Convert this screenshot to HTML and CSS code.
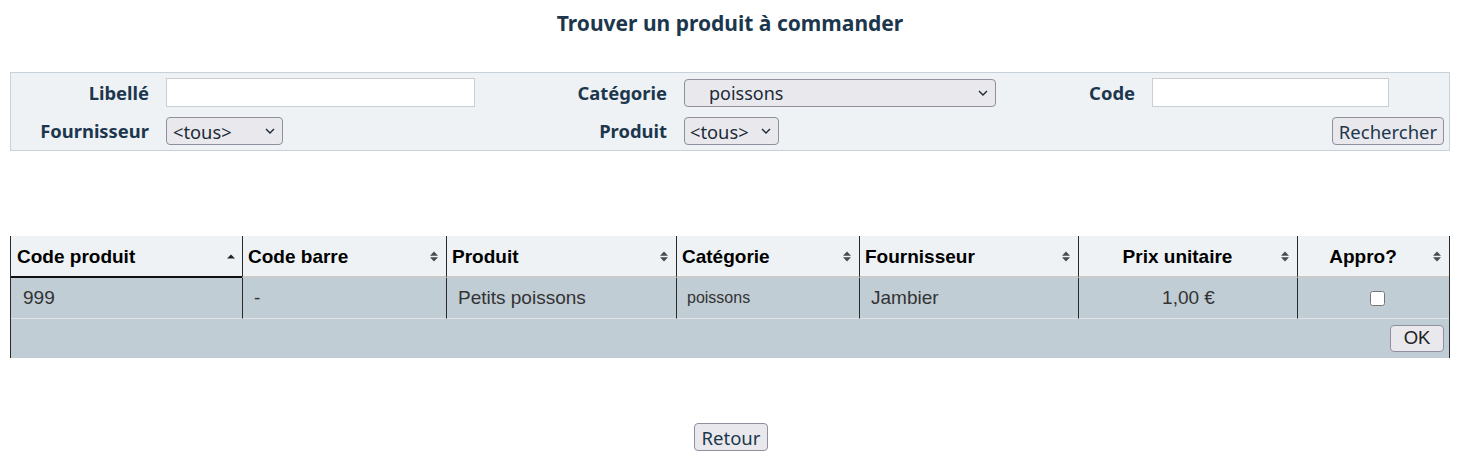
FILE: index.html
```html
<!DOCTYPE html>
<html lang="fr">
<head>
<meta charset="utf-8">
<title>Trouver un produit à commander</title>
<link rel="stylesheet" href="styles.css">
</head>
<body>
<h1 class="title">Trouver un produit à commander</h1>

<form class="search">
  <label class="lbl">Libellé</label>
  <div class="fld"><input class="txt txt-lib" type="text"></div>
  <label class="lbl">Catégorie</label>
  <div class="fld">
    <span class="sel sel-cat">
      <select><option>poissons</option></select>
      <svg class="chev" width="10" height="6" viewBox="0 0 10 6"><path d="M1 1 L5 5 L9 1" fill="none" stroke="#1d2733" stroke-width="1.4"/></svg>
    </span>
  </div>
  <label class="lbl">Code</label>
  <div class="fld"><input class="txt txt-code" type="text"></div>

  <label class="lbl">Fournisseur</label>
  <div class="fld">
    <span class="sel sel-four">
      <select><option>&lt;tous&gt;</option></select>
      <svg class="chev" width="10" height="6" viewBox="0 0 10 6"><path d="M1 1 L5 5 L9 1" fill="none" stroke="#1d2733" stroke-width="1.4"/></svg>
    </span>
  </div>
  <label class="lbl">Produit</label>
  <div class="fld">
    <span class="sel sel-prod">
      <select><option>&lt;tous&gt;</option></select>
      <svg class="chev" width="10" height="6" viewBox="0 0 10 6"><path d="M1 1 L5 5 L9 1" fill="none" stroke="#1d2733" stroke-width="1.4"/></svg>
    </span>
  </div>
  <div class="spacer"></div>
  <div class="fld fld-btn"><button type="button" class="btn btn-search">Rechercher</button></div>
</form>

<table class="grid">
  <colgroup>
    <col class="c1"><col class="c2"><col class="c3"><col class="c4"><col class="c5"><col class="c6"><col class="c7">
  </colgroup>
  <thead>
    <tr>
      <th class="sorted"><div class="hd"><span class="ht">Code produit</span><svg class="si" width="8" height="11" viewBox="0 0 8 11"><path d="M0 7.5 L4 3.5 L8 7.5 Z" fill="#222"/></svg></div></th>
      <th><div class="hd"><span class="ht">Code barre</span><svg class="si" width="8" height="11" viewBox="0 0 8 11"><path d="M0 4.7 L4 0.5 L8 4.7 Z M0 6.3 L4 10.5 L8 6.3 Z" fill="#4a4a4a"/></svg></div></th>
      <th><div class="hd"><span class="ht">Produit</span><svg class="si" width="8" height="11" viewBox="0 0 8 11"><path d="M0 4.7 L4 0.5 L8 4.7 Z M0 6.3 L4 10.5 L8 6.3 Z" fill="#4a4a4a"/></svg></div></th>
      <th><div class="hd"><span class="ht">Catégorie</span><svg class="si" width="8" height="11" viewBox="0 0 8 11"><path d="M0 4.7 L4 0.5 L8 4.7 Z M0 6.3 L4 10.5 L8 6.3 Z" fill="#4a4a4a"/></svg></div></th>
      <th><div class="hd"><span class="ht">Fournisseur</span><svg class="si" width="8" height="11" viewBox="0 0 8 11"><path d="M0 4.7 L4 0.5 L8 4.7 Z M0 6.3 L4 10.5 L8 6.3 Z" fill="#4a4a4a"/></svg></div></th>
      <th><div class="hd"><span class="ht center">Prix unitaire</span><svg class="si" width="8" height="11" viewBox="0 0 8 11"><path d="M0 4.7 L4 0.5 L8 4.7 Z M0 6.3 L4 10.5 L8 6.3 Z" fill="#4a4a4a"/></svg></div></th>
      <th><div class="hd"><span class="ht center">Appro?</span><svg class="si" width="8" height="11" viewBox="0 0 8 11"><path d="M0 4.7 L4 0.5 L8 4.7 Z M0 6.3 L4 10.5 L8 6.3 Z" fill="#4a4a4a"/></svg></div></th>
    </tr>
  </thead>
  <tbody>
    <tr class="row">
      <td>999</td>
      <td>-</td>
      <td>Petits poissons</td>
      <td class="small">poissons</td>
      <td>Jambier</td>
      <td class="center">1,00 €</td>
      <td class="center chk"><input type="checkbox"></td>
    </tr>
  </tbody>
  <tfoot>
    <tr>
      <td colspan="7" class="foot"><button type="button" class="btn btn-ok">OK</button></td>
    </tr>
  </tfoot>
</table>

<div class="back"><button type="button" class="btn btn-back">Retour</button></div>
</body>
</html>
```

FILE: styles.css
```css
html, body {
  margin: 0;
  padding: 0;
  background: #ffffff;
}

body {
  padding: 0 12px 0 10px;
  font-family: "Noto Sans", "DejaVu Sans", sans-serif;
  color: #1c374d;
}

.title {
  margin: 10px 0 36px;
  font-size: 21px;
  line-height: 26px;
  font-weight: 700;
  text-align: center;
  color: #1c374d;
}

/* search form */
.search {
  display: grid;
  grid-template-columns: 146px 343px 175px 325px 143px 306px;
  grid-template-rows: 29px 28px;
  row-gap: 10px;
  align-items: center;
  background: #eef2f5;
  border: 1px solid #c6d1da;
  padding: 5px 0;
}

.lbl {
  text-align: right;
  padding-right: 8px;
  font-weight: 700;
  font-size: 18.4px;
  line-height: 24px;
  color: #1c374d;
}

.fld {
  padding-left: 9px;
  display: flex;
  align-items: center;
}

.fld-btn {
  justify-content: flex-end;
  padding-right: 5px;
}

.txt {
  box-sizing: border-box;
  height: 29px;
  border: 1px solid #c9ced3;
  background: #fff;
  margin: 0;
  padding: 0 4px;
  font: 16px "Noto Sans", sans-serif;
}

.txt-lib { width: 309px; }
.txt-code { width: 237px; }

.sel {
  position: relative;
  display: inline-block;
}

.sel select {
  appearance: none;
  -webkit-appearance: none;
  box-sizing: border-box;
  height: 28px;
  margin: 0;
  border: 1px solid #8f8f9d;
  border-radius: 4px;
  background: #e9e9ed;
  color: #1c2a38;
  font: 18.3px "Noto Sans", sans-serif;
  padding: 0 22px 0 6px;
}

.sel-cat select { width: 312px; padding-left: 24px; font-size: 18px; }
.sel-four select { width: 117px; }
.sel-prod select { width: 95px; padding-left: 5px; }

.chev {
  position: absolute;
  right: 8px;
  top: 11px;
  pointer-events: none;
}

.btn {
  box-sizing: border-box;
  height: 28px;
  margin: 0;
  padding: 0 6px;
  border: 1px solid #8f8f9d;
  border-radius: 4px;
  background: #e9e9ed;
  color: #1c374d;
  font: 18.5px "Noto Sans", sans-serif;
}

.btn-search { width: 112px; padding: 0; }

/* table */
.grid {
  margin-top: 85px;
  width: 1440px;
  border-collapse: separate;
  border-spacing: 0;
  border-left: 1px solid #2a2a2a;
  border-right: 1px solid #2a2a2a;
  font-family: "Liberation Sans", Arial, sans-serif;
  table-layout: fixed;
}

.c1 { width: 231px; }
.c2 { width: 204px; }
.c3 { width: 230px; }
.c4 { width: 183px; }
.c5 { width: 219px; }
.c6 { width: 219px; }
.c7 { width: 152px; }

.grid th {
  box-sizing: border-box;
  height: 42px;
  padding: 1px 8px 0 5px;
  background: #eef2f5;
  border-bottom: 2px solid #cacaca;
  border-left: 1px solid #2a2a2a;
  font-size: 19px;
  font-weight: 700;
  color: #000;
  text-align: left;
}

.grid th.sorted { border-left: none; border-bottom-color: #111; padding-left: 6px; padding-right: 7px; }

.hd {
  display: flex;
  align-items: center;
}

.ht {
  flex: 1;
  white-space: nowrap;
}

.ht.center { text-align: center; }

.si {
  flex: none;
  margin-left: 10px;
}

.row td {
  box-sizing: border-box;
  height: 41px;
  padding: 0 10px 0 11px;
  background: #c0cdd5;
  border-left: 1px solid #2a2a2a;
  border-bottom: 1px solid #dfe3e6;
  font-size: 19px;
  color: #333;
}

.row td:first-child { border-left: none; padding-left: 12px; }
.row td.small { font-size: 16px; padding-left: 10px; }
.row td.center { text-align: center; }
.row td.chk { padding: 0; }
.row td.chk input {
  margin: 0;
  width: 15px;
  height: 15px;
  vertical-align: middle;
  position: relative;
  left: 4px;
}

.foot {
  box-sizing: border-box;
  height: 39px;
  padding: 5px 5px 6px;
  background: #c0cdd5;
  text-align: right;
}

.btn-ok {
  width: 54px;
  height: 27px;
  padding: 0;
  font-family: "Liberation Sans", Arial, sans-serif;
  font-size: 18.5px;
  color: #222;
}

.back {
  margin-top: 65px;
  text-align: center;
  padding-left: 2px;
}

.btn-back {
  width: 74px;
  padding: 0;
}
```
